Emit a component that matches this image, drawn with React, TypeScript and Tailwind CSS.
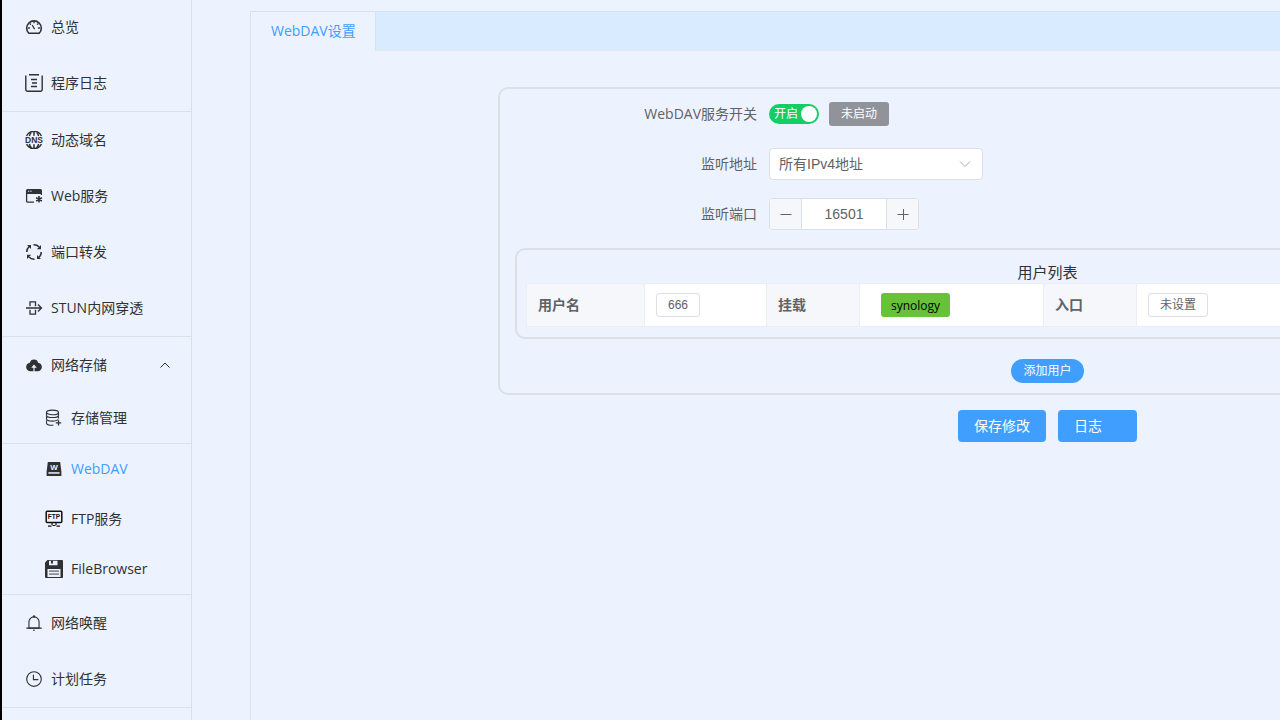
import { ReactNode } from "react";

const DashboardIcon = () => (
  <svg viewBox="0 0 18 18" className="size-[18px]" fill="none" stroke="currentColor" strokeWidth="1.600" strokeLinecap="round" strokeLinejoin="round">
    <path d="M3.800 15.300A7.300 7.300 0 1 1 14.200 15.300z" />
    <path d="M9 3.800v1M5 5.800l.600.600M13 5.800l-.600.600M3.500 10h1M13.500 10h1M7.500 7.500 9.300 10.800" strokeWidth="1.300" />
  </svg>
);

const LogIcon = () => (
  <svg viewBox="0 0 18 18" className="size-[18px]" fill="none" stroke="currentColor" strokeWidth="1.400">
    <path d="M.8 1.500v14a1.700 1.700 0 0 0 1.700 1.700h13a1.700 1.700 0 0 0 1.700-1.700v-14M4 .7h10M6 5.500h6M7 9h5M6 12.500h6" />
  </svg>
);

const DnsIcon = () => (
  <svg viewBox="0 0 18 18" className="size-[18px]" fill="none" stroke="currentColor" strokeWidth="1.500">
    <path d="M1.600 4.800a8.300 8.300 0 0 1 14.800 0M1.600 13.200a8.300 8.300 0 0 0 14.800 0M9 1v3.800M9 13.200v4M6.400 1.200C5.300 2.300 4.700 3.600 4.400 5M11.600 1.200c1.100 1.100 1.700 2.400 2 3.800M6.400 16.800c-1.100-1.100-1.700-2.400-2-3.800M11.600 16.800c1.100-1.100 1.700-2.400 2-3.800" />
    <text x="9" y="12" textAnchor="middle" fontSize="8.500" fontWeight="700" fill="currentColor" stroke="none" fontFamily="Liberation Sans, sans-serif">DNS</text>
  </svg>
);

const WebIcon = () => (
  <svg viewBox="0 0 18 18" className="size-[18px]" fill="none" stroke="currentColor">
    <path d="M2.500 2h13A1.500 1.500 0 0 1 17 3.500V7H1V3.500A1.500 1.500 0 0 1 2.500 2z" fill="currentColor" stroke="none" />
    <path d="M3 4.200h1.300M5.300 4.200h1.300" stroke="#ebf2fe" />
    <path d="M1.600 6v8.200a1 1 0 0 0 1 1H9M16.400 6v2" strokeWidth="1.300" />
    <path d="M14 9v6.600M11.100 10.700l5.800 3.300M16.900 10.700l-5.800 3.300" strokeWidth="1.600" />
  </svg>
);

const ForwardIcon = () => (
  <svg viewBox="0 0 18 18" className="size-[18px]" fill="none" stroke="currentColor" strokeWidth="1.600">
    <path d="M1.800 9A7.200 7.200 0 0 1 4.200 3.500M8.500 1.800a7.200 7.200 0 0 1 5.600 2.200M16.200 9a7.200 7.200 0 0 1-2.400 5.500M9.500 16.200a7.200 7.200 0 0 1-5.600-2.200" />
    <path d="M2 2h4v4zM16 2v4.200h-4.200zM16 16h-4v-4zM2 16v-4.200h4.200z" fill="currentColor" stroke="none" />
  </svg>
);

const StunIcon = () => (
  <svg viewBox="0 0 18 18" className="size-[18px]" fill="none" stroke="currentColor" strokeWidth="1.300">
    <path d="M1 9h15.500M13 5.500 16.500 9 13 12.500M5 7.200V5.400V2.900h5.500v4.300M5 10.800v4.300h5.500v-4.300" />
  </svg>
);

const CloudIcon = () => (
  <svg viewBox="0 0 1024 1024" className="size-[18px]" fill="currentColor">
    <path d="M544 864V672h128L512 480 352 672h128v192H320v-1.600c-5.376.32-10.496 1.600-16 1.600A240 240 0 0 1 64 624c0-123.136 93.120-223.488 212.608-237.248A239.808 239.808 0 0 1 512 192a239.872 239.872 0 0 1 235.456 194.752c119.488 13.760 212.480 114.112 212.480 237.248a240 240 0 0 1-240 240c-5.376 0-10.560-1.280-16-1.600v1.600H544z" />
  </svg>
);

const DatabaseIcon = () => (
  <svg viewBox="0 0 18 18" className="size-[18px]" fill="none" stroke="currentColor" strokeWidth="1.100">
    <ellipse cx="7.500" cy="3.400" rx="6" ry="2.300" />
    <path d="M1.500 3.400v2.800c0 1.300 2.700 2.300 6 2.300s6-1 6-2.300V3.400M1.500 7.600v2.200c0 1.300 2.700 2.300 6 2.300 2.700 0 5-.700 5.700-1.600M13.500 7.600v2M1.500 11.400v2.600c0 1.300 2.700 2.300 6 2.300h1" />
    <path d="M13.500 11.200v5.400M10.800 13.900h5.400" strokeWidth="1.300" />
  </svg>
);

const WebdavIcon = () => (
  <svg viewBox="0 0 18 18" className="size-[18px] text-[#303133]" fill="currentColor">
    <path d="M2.800 2h12.400l1.200 9.500V16H1.600v-4.500z" />
    <path d="M3.400 12.200h11.200v1.500H3.400z" fill="#ebf2fe" />
    <text x="9" y="9.500" textAnchor="middle" fontSize="8" fontWeight="700" fill="#ebf2fe" fontFamily="Liberation Sans, sans-serif">W</text>
  </svg>
);

const FtpIcon = () => (
  <svg viewBox="0 0 18 18" className="size-[18px] text-[#111]" fill="none" stroke="currentColor" strokeWidth="1.500">
    <rect x="1.200" y="1.200" width="15.600" height="11.400" rx="1" />
    <path d="M7 12.500v2.500M11 12.500v2.500M3 16.200h3.500M7.500 15.500h3M11.500 16.200H15" strokeWidth="1.200" />
    <text x="9" y="9.400" textAnchor="middle" fontSize="6.500" fontWeight="700" fill="currentColor" stroke="none" fontFamily="Liberation Sans, sans-serif">FTP</text>
  </svg>
);

const FloppyIcon = () => (
  <svg viewBox="0 0 18 18" className="size-[18px]" fill="currentColor">
    <path d="M2.500 0H17a1 1 0 0 1 1 1v16a1 1 0 0 1-1 1H1a1 1 0 0 1-1-1V2.500z" />
    <path d="M4 .8h8.500v4.400H4zM2.500 9h13v8h-13z" fill="#ebf2fe" />
    <path d="M6 .8h2v2.700H6z" />
    <path d="M4 10.300h10v1.600H4zM4 13.300h10v1.600H4z" fill="#8b8e93" />
  </svg>
);

const BellIcon = () => (
  <svg viewBox="0 0 1024 1024" className="size-[18px]" fill="currentColor">
    <path d="M512 64a64 64 0 0 1 64 64v64H448v-64a64 64 0 0 1 64-64z" />
    <path d="M256 768h512V448a256 256 0 1 0-512 0v320zm256-640a320 320 0 0 1 320 320v384H192V448a320 320 0 0 1 320-320z" />
    <path d="M96 768h832q32 0 32 32t-32 32H96q-32 0-32-32t32-32zm352 128h128a64 64 0 0 1-128 0z" />
  </svg>
);

const ClockIcon = () => (
  <svg viewBox="0 0 1024 1024" className="size-[18px]" fill="currentColor">
    <path d="M512 896a384 384 0 1 0 0-768 384 384 0 0 0 0 768zm0 64a448 448 0 1 1 0-896 448 448 0 0 1 0 896z" />
    <path d="M480 256a32 32 0 0 1 32 32v256a32 32 0 0 1-64 0V288a32 32 0 0 1 32-32z" />
    <path d="M480 512h256q32 0 32 32t-32 32H480q-32 0-32-32t32-32z" />
  </svg>
);

function Chevron({ up = false }: { up?: boolean }) {
  return (
    <svg viewBox="0 0 12 12" className="size-3" fill="none" stroke="currentColor">
      <path d={up ? "M1.500 8.500 6 4l4.500 4.500" : "M1 3.500 6 8.500l5-5"} />
    </svg>
  );
}

function Item({ icon, label }: { icon: ReactNode; label: string }) {
  return (
    <li>
      <a href="#" className="flex h-14 items-center gap-2 pl-[23px]">
        {icon}
        {label}
      </a>
    </li>
  );
}

function SubItem({ icon, label, active = false }: { icon: ReactNode; label: string; active?: boolean }) {
  return (
    <li>
      <a href="#" aria-current={active ? "page" : undefined} className={`flex h-[50px] items-center gap-2 pl-[43px] ${active ? "text-[#409eff]" : ""}`}>
        {icon}
        {label}
      </a>
    </li>
  );
}

const group = "border-b border-[#dcdfe6]";

function Sidebar() {
  return (
    <nav className="w-[190px] shrink-0 border-r border-[#dcdfe6] text-[#303133]">
      <ul className={`-mt-px ${group}`}>
        <Item icon={<DashboardIcon />} label="总览" />
        <Item icon={<LogIcon />} label="程序日志" />
      </ul>
      <ul className={group}>
        <Item icon={<DnsIcon />} label="动态域名" />
        <Item icon={<WebIcon />} label="Web服务" />
        <Item icon={<ForwardIcon />} label="端口转发" />
        <Item icon={<StunIcon />} label="STUN内网穿透" />
      </ul>
      <button type="button" aria-expanded="true" className="flex h-14 w-full items-center gap-2 pr-5 pl-[23px]">
        <CloudIcon />
        <span className="flex-1 text-left">网络存储</span>
        <Chevron up />
      </button>
      <ul className={group}>
        <SubItem icon={<DatabaseIcon />} label="存储管理" />
      </ul>
      <ul className={group}>
        <SubItem icon={<WebdavIcon />} label="WebDAV" active />
        <SubItem icon={<FtpIcon />} label="FTP服务" />
        <SubItem icon={<FloppyIcon />} label="FileBrowser" />
      </ul>
      <ul className={group}>
        <Item icon={<BellIcon />} label="网络唤醒" />
        <Item icon={<ClockIcon />} label="计划任务" />
      </ul>
    </nav>
  );
}

const row = "flex h-8 items-center";
const label = "w-[254px] pr-3 text-right";
const head = "border border-[#ebeef5] bg-[#f5f7fa] px-[11px] text-left font-bold";
const cell = "border border-[#ebeef5] bg-white px-[11px]";
const tag = "h-6 rounded-[3px] border border-[#dcdfe6] bg-white px-[11px] text-xs";

function SettingsForm() {
  return (
    <form className="flex flex-col items-center" onSubmit={(e) => e.preventDefault()}>
      <div className="w-full rounded-[10px] border-2 border-[#dcdfe6] px-[15px] pt-[9px] pb-[10px]">
        <div className={row}>
          <label htmlFor="enabled" className={label}>WebDAV服务开关</label>
          <label className="flex h-5 w-[50px] cursor-pointer items-center justify-between rounded-full bg-[#13ce66] pr-0.5 pl-[5px] text-xs text-white">
            <input id="enabled" type="checkbox" role="switch" defaultChecked className="sr-only" />
            <span>开启</span>
            <span className="size-4 rounded-full bg-white" />
          </label>
          <button type="button" className="ml-2.5 h-6 rounded-[3px] bg-[#909399] px-3 text-xs text-white">未启动</button>
        </div>
        <div className={`mt-[18px] ${row}`}>
          <label htmlFor="address" className={label}>监听地址</label>
          <div className="grid h-8 w-[214px] items-center">
            <select id="address" className="col-start-1 row-start-1 h-8 w-full appearance-none rounded border border-[#dcdfe6] bg-white px-[9px] font-['Liberation_Sans','Noto_Sans_CJK_SC',sans-serif]">
              <option>所有IPv4地址</option>
            </select>
            <span className="pointer-events-none col-start-1 row-start-1 mr-3 justify-self-end text-[#a8abb2]">
              <Chevron />
            </span>
          </div>
        </div>
        <div className={`mt-[18px] ${row}`}>
          <label htmlFor="port" className={label}>监听端口</label>
          <div className="flex h-8 w-[150px] overflow-hidden rounded border border-[#dcdfe6] bg-white">
            <button type="button" aria-label="减少" className="flex w-8 items-center justify-center border-r border-[#dcdfe6] bg-[#f5f7fa]">
              <svg viewBox="0 0 12 12" className="size-3" stroke="currentColor"><path d="M.5 6.500h11" /></svg>
            </button>
            <input id="port" defaultValue="16501" className="min-w-0 flex-1 text-center font-['Liberation_Sans',sans-serif] outline-none" />
            <button type="button" aria-label="增加" className="flex w-8 items-center justify-center border-l border-[#dcdfe6] bg-[#f5f7fa]">
              <svg viewBox="0 0 12 12" className="size-3" stroke="currentColor"><path d="M.5 6.500h11M6.500 1v11" /></svg>
            </button>
          </div>
        </div>
        <section className="mt-[18px] rounded-[10px] border-2 border-[#dcdfe6] px-[9px] pt-[11px] pb-[10px]">
          <h2 className="text-center text-[15px] leading-[22px] text-[#303133]">用户列表</h2>
          <table className="w-full table-fixed border-collapse">
            <tbody>
              <tr className="h-[43px]">
                <th className={`w-[118px] ${head}`}>用户名</th>
                <td className={`w-[122px] ${cell}`}>
                  <button type="button" className={`${tag} font-['Liberation_Sans',sans-serif]`}>666</button>
                </td>
                <th className={`w-[93px] ${head}`}>挂载</th>
                <td className="w-[184px] border border-[#ebeef5] bg-white px-[21px]">
                  <button type="button" className="h-6 rounded-[3px] bg-[#67c23a] px-2.5 pt-0.5 text-xs text-black">synology</button>
                </td>
                <th className={`w-[93px] ${head}`}>入口</th>
                <td className={cell}>
                  <button type="button" className={tag}>未设置</button>
                </td>
              </tr>
            </tbody>
          </table>
        </section>
        <div className="mt-5 flex justify-center">
          <button type="button" className="h-6 rounded-full bg-[#409eff] px-3 text-xs text-white">添加用户</button>
        </div>
      </div>
      <div className="mt-[15px] flex gap-3 text-white">
        <button type="submit" className="h-8 rounded bg-[#409eff] px-4">保存修改</button>
        <button type="button" className="h-8 w-[79px] rounded bg-[#409eff] px-4 text-left">日志</button>
      </div>
    </form>
  );
}

export default function App() {
  return (
    <div className="flex h-screen overflow-hidden border-l-2 border-black bg-[#ecf3ff] font-['Open_Sans','Noto_Sans_CJK_SC',sans-serif] text-sm text-[#606266]">
      <Sidebar />
      <main className="min-w-0 flex-1 overflow-hidden pt-[11px] pl-[58px]">
        <div className="min-h-full border-t border-l border-[#dcdfe6]">
          <div role="tablist" className="flex h-[39px] bg-[#d9ebff]">
            <button type="button" role="tab" aria-selected="true" className="border-r border-[#dcdfe6] bg-[#ecf3ff] pr-[19px] pb-0.5 pl-5 text-[#409eff]">
              WebDAV设置
            </button>
            <div className="flex-1 border-b border-[#e4e7ed]" />
          </div>
          <div className="pt-9 pl-[247px]">
            <div className="min-w-[1099px]">
              <SettingsForm />
            </div>
          </div>
        </div>
      </main>
    </div>
  );
}
